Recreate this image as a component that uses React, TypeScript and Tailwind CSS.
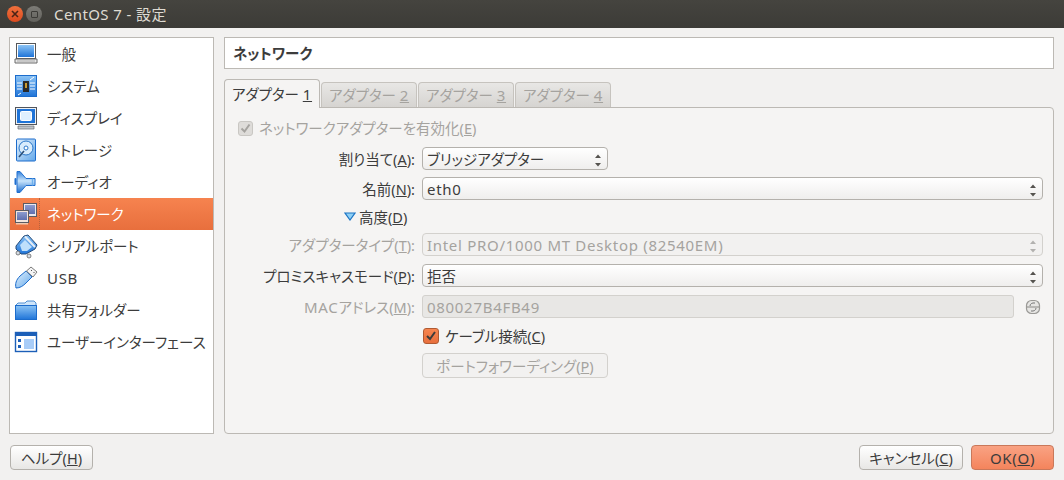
import React from 'react';

const BlueDefs = () => (
  <defs>
    <linearGradient id="blue" x1="0" y1="0" x2="0" y2="1">
      <stop offset="0" stopColor="#8cc4f5" />
      <stop offset="1" stopColor="#1f74d8" />
    </linearGradient>
    <linearGradient id="sky" x1="0" y1="0" x2="1" y2="1">
      <stop offset="0" stopColor="#e3f1fd" />
      <stop offset="1" stopColor="#63a8ea" />
    </linearGradient>
    <linearGradient id="slate" x1="0" y1="0" x2="0" y2="1">
      <stop offset="0" stopColor="#8d9bcf" />
      <stop offset="1" stopColor="#5f6fae" />
    </linearGradient>
    <linearGradient id="cone" x1="0" y1="0" x2="0" y2="1">
      <stop offset="0" stopColor="#2f7fdc" />
      <stop offset="0.45" stopColor="#c8e4fb" />
      <stop offset="1" stopColor="#1f6fd0" />
    </linearGradient>
  </defs>
);

const GeneralIcon = () => (
  <svg width="24" height="24" viewBox="0 0 24 24">
    <rect x="2.5" y="1.5" width="19" height="15" fill="#fff" stroke="#55575a" />
    <rect x="4" y="3" width="16" height="12" fill="url(#blue)" />
    <path d="M1 17h22v4H1z" fill="#e9e9e9" stroke="#6a6a6a" strokeWidth="1" />
    <path d="M3 19h18" stroke="#a8a8a8" />
  </svg>
);

const SystemIcon = () => (
  <svg width="24" height="24" viewBox="0 0 24 24">
    <rect x="1.5" y="1.5" width="21" height="21" fill="url(#blue)" stroke="#1c6ccc" />
    <rect x="9" y="7" width="6" height="11" fill="#2a2a2a" />
    <rect x="11" y="9" width="2" height="5" fill="#c99a2e" />
    <path d="M3 9h5M3 12h5M3 15h5M16 9h5M16 12h5M16 15h5M16 6l4-3M7 19l-3 2" stroke="#fff" strokeWidth="1" />
  </svg>
);

const DisplayIcon = () => (
  <svg width="24" height="24" viewBox="0 0 24 24">
    <rect x="1.5" y="1.5" width="21" height="17" fill="#eef1f5" stroke="#51555c" />
    <rect x="3" y="3" width="18" height="14" fill="#1f74d8" />
    <rect x="6.5" y="5.5" width="11" height="9" rx="1" fill="#dff0ff" stroke="#fff" />
    <path d="M4 20h16v3H4z" fill="#bfc3c8" stroke="#6a6e74" strokeWidth="0.7" />
  </svg>
);

const StorageIcon = () => (
  <svg width="24" height="24" viewBox="0 0 24 24">
    <rect x="2.5" y="1" width="19" height="22" rx="1" fill="url(#sky)" stroke="#1c6ccc" />
    <circle cx="12" cy="10" r="7" fill="#d8ecfc" stroke="#2a77c9" />
    <circle cx="12" cy="10" r="2" fill="#fff" stroke="#2a77c9" />
    <path d="M5 19l5-6" stroke="#2c4f78" strokeWidth="1.6" />
  </svg>
);

const AudioIcon = () => (
  <svg width="24" height="24" viewBox="0 0 24 24">
    <rect x="0.5" y="8" width="2" height="7" rx="1" fill="#1f6fd0" />
    <path d="M3 1.500h3l6 7h9v7h-9l-6 7H3z" fill="url(#cone)" stroke="#1f6fd0" strokeWidth="1" />
    <path d="M18.500 8.500v7" stroke="#6fb0ec" strokeWidth="1.500" />
  </svg>
);

const NetworkIcon = () => (
  <svg width="24" height="24" viewBox="0 0 24 24">
    <rect x="9.500" y="1.500" width="13" height="13" fill="#e9e7ec" stroke="#5b5b63" />
    <rect x="11" y="3" width="10" height="9" fill="url(#slate)" />
    <rect x="1.500" y="8.500" width="13" height="12" fill="#f3e4dc" stroke="#5b5b63" />
    <rect x="3" y="10" width="10" height="8" fill="url(#slate)" />
    <path d="M2 21h12v1.500H2z" fill="#f0c8ae" />
  </svg>
);

const SerialIcon = () => (
  <svg width="26" height="26" viewBox="0 0 26 26">
    <path d="M11 3l4-1 9 10-2 4-9 5H8L3 16v-3z" fill="url(#blue)" stroke="#244a78" strokeWidth="1" />
    <path d="M12 3.500l10 10.500" stroke="#e6eef7" strokeWidth="2" />
    <path d="M7 12l5-5 7 7-5 4H9z" fill="#bfe0fb" />
    <circle cx="5" cy="20" r="2" fill="#d6dce3" stroke="#555" strokeWidth="0.700" />
    <circle cx="16" cy="23" r="2" fill="#d6dce3" stroke="#555" strokeWidth="0.700" />
  </svg>
);

const UsbIcon = () => (
  <svg width="24" height="24" viewBox="0 0 24 24">
    <path d="M2 22c-1-4 0-8 4-12l6-5 6 6-6 6c-3 3-6 5-10 5z" fill="url(#sky)" stroke="#1c6ccc" />
    <path d="M12.500 5L17 1l6 5-4 5z" fill="#f4f4f4" stroke="#7b7b7b" />
    <path d="M17 4l1 1M19.500 6l1 1" stroke="#555" />
  </svg>
);

const FolderIcon = () => (
  <svg width="24" height="24" viewBox="0 0 24 24">
    <path d="M2 7l2-2h7l2-2h7l2 2v3H2z" fill="#cfe5f9" stroke="#2a77c9" strokeWidth="0.800" />
    <rect x="1.500" y="7.500" width="21" height="14" fill="url(#blue)" stroke="#1c6ccc" />
  </svg>
);

const InterfaceIcon = () => (
  <svg width="24" height="24" viewBox="0 0 24 24">
    <rect x="1.500" y="2.500" width="21" height="19" fill="#fff" stroke="#1c5fb8" strokeWidth="1.400" />
    <rect x="2" y="3" width="20" height="3" fill="#1c5fb8" />
    <rect x="10" y="9" width="10" height="10" fill="#a9cdf8" />
    <rect x="4" y="9" width="3" height="3" fill="#1c5fb8" />
    <rect x="4" y="15" width="3" height="3" fill="#1c5fb8" />
  </svg>
);

const latin = 'text-[15px] tracking-[0.7px]';

const categories = [
  { name: '一般', icon: <GeneralIcon /> },
  { name: 'システム', icon: <SystemIcon /> },
  { name: 'ディスプレイ', icon: <DisplayIcon /> },
  { name: 'ストレージ', icon: <StorageIcon /> },
  { name: 'オーディオ', icon: <AudioIcon /> },
  { name: 'ネットワーク', icon: <NetworkIcon />, selected: true },
  { name: 'シリアルポート', icon: <SerialIcon /> },
  { name: <span className={latin}>USB</span>, icon: <UsbIcon /> },
  { name: '共有フォルダー', icon: <FolderIcon /> },
  { name: 'ユーザーインターフェース', icon: <InterfaceIcon /> },
];

const tabs = ['1', '2', '3', '4'];

const Spinner = ({ disabled = false }: { disabled?: boolean }) => (
  <svg width="8" height="14" viewBox="0 0 8 14" className={`mt-[2px] ${disabled ? 'opacity-40' : ''}`}>
    <path d="M4 1.500l3 3.500H1zM1 10h6l-3 3.500z" fill="#55534f" />
  </svg>
);

const Combo = ({ children, disabled = false, className = '' }: { children: React.ReactNode; disabled?: boolean; className?: string }) => (
  <div
    className={`flex h-[23px] items-center justify-between rounded-[4px] border pl-[4px] pr-[5px] ${
      disabled
        ? 'border-[#d3d1cd] bg-[#f2f1f0] text-[#a5a39f]'
        : 'border-[#b4b1ac] bg-gradient-to-b from-white to-[#efeeed] text-[#3c3c3c]'
    } ${className}`}
  >
    <span>{children}</span>
    <Spinner disabled={disabled} />
  </div>
);

const Row = ({ label, disabled = false, className = '', children }: { label: React.ReactNode; disabled?: boolean; className?: string; children: React.ReactNode }) => (
  <div className={`flex items-center ${className}`}>
    <div className={`w-[190px] text-right ${disabled ? 'text-[#a5a39f]' : 'text-[#3c3c3c]'}`}>{label}</div>
    <div className="ml-[7px] w-[621px]">{children}</div>
  </div>
);

export default function App() {
  return (
    <div
      className='flex h-[480px] w-[1064px] flex-col overflow-hidden bg-[#f2f1f0] text-[14.5px] leading-[20px] text-[#3c3c3c] [font-feature-settings:"palt"]'
      style={{ fontFamily: '"Noto Sans", "Noto Sans CJK JP", sans-serif' }}
    >
      <svg width="0" height="0" className="absolute">
        <BlueDefs />
      </svg>

      {/* title bar */}
      <div className="flex h-[28px] items-center bg-gradient-to-b from-[#45443f] to-[#3c3b37] pl-[7px] text-[#dfdbd2]">
        <div className="flex h-[16px] w-[16px] items-center justify-center rounded-full bg-gradient-to-b from-[#f0703c] to-[#dc4a1e]">
          <svg width="8" height="8" viewBox="0 0 8 8">
            <path d="M1 1l6 6M7 1L1 7" stroke="#4b2416" strokeWidth="1.600" />
          </svg>
        </div>
        <div className="ml-[3px] flex h-[16px] w-[16px] items-center justify-center rounded-full bg-gradient-to-b from-[#7d7c77] to-[#62615c]">
          <div className="h-[7px] w-[7px] rounded-[1px] border border-[#3c3b37]" />
        </div>
        <span className="ml-[12px] text-[15px] tracking-[0.4px]">CentOS 7 - 設定</span>
      </div>

      <div className="flex flex-1 flex-col pb-[9px] pl-[9px] pr-[10px] pt-[9px]">
        <div className="flex h-[397px] gap-[10px]">
          {/* category list */}
          <div className="w-[205px] border border-[#bcb9b4] bg-white">
            {categories.map((c, i) => (
              <div
                key={i}
                className={`flex h-[32px] items-center whitespace-nowrap ${
                  c.selected ? 'bg-gradient-to-b from-[#f6834f] to-[#e86f3d] text-white' : ''
                }`}
              >
                <div className="flex w-[29px] shrink-0 justify-center pl-[3px]">{c.icon}</div>
                <div className={`flex h-full items-center pl-[7px] ${c.selected ? 'border-l border-dotted border-[#b8623c]' : 'border-l border-transparent'}`}>
                  {c.name}
                </div>
              </div>
            ))}
          </div>

          {/* network page */}
          <div className="flex w-[830px] flex-col">
            <div className="flex h-[32px] items-center border border-[#bcb9b4] bg-white pl-[8px] font-bold">ネットワーク</div>

            <div className="mt-[10px] flex h-[28px] items-end">
              {tabs.map((t, i) => (
                <div
                  key={t}
                  className={
                    i === 0
                      ? 'relative z-10 -mb-px mr-[1px] flex h-[29px] w-[96px] items-center justify-center rounded-t-[4px] border border-b-0 border-[#bcb9b4] bg-[#f5f4f3]'
                      : 'mr-[1px] flex h-[25px] w-[96px] items-center justify-center rounded-t-[4px] border border-b-0 border-[#c6c3be] bg-gradient-to-b from-[#e8e7e5] to-[#d6d4d1] text-[#a5a39f]'
                  }
                >
                  <span>アダプター <u className={latin}>{t}</u></span>
                </div>
              ))}
            </div>

            <div className="flex flex-1 flex-col rounded-b-[4px] rounded-tr-[4px] border border-[#bcb9b4] bg-[#f5f4f3] pt-[9px]">
              <div className="flex h-[22px] items-center gap-[6px] pl-[13px] text-[#a5a39f]">
                <div className="flex h-[15px] w-[15px] items-center justify-center rounded-[3px] border border-[#c9c7c3] bg-[#dedcd9]">
                  <svg width="11" height="11" viewBox="0 0 11 11">
                    <path d="M1.500 5.500l3 3 5-7" stroke="#a5a39f" strokeWidth="2" fill="none" />
                  </svg>
                </div>
                <span>ネットワークアダプターを有効化(<u>E</u>)</span>
              </div>

              <Row label={<>割り当て(<u>A</u>):</>} className="mt-[8px]">
                <Combo className="w-[186px]">ブリッジアダプター</Combo>
              </Row>
              <Row label={<>名前(<u>N</u>):</>} className="mt-[7px]">
                <Combo><span className={latin}>eth0</span></Combo>
              </Row>
              <div className="mt-[5px] flex h-[23px] items-center pl-[119px]">
                <svg width="12" height="9" viewBox="0 0 12 9">
                  <path d="M1 1h10L6 8z" fill="#8fd0f5" stroke="#1c74c4" strokeWidth="1.200" />
                </svg>
                <span className="ml-[3px]">高度(<u>D</u>)</span>
              </div>
              <Row label={<>アダプタータイプ(<u>T</u>):</>} disabled className="mt-[5px]">
                <Combo disabled><span className={latin}>Intel PRO/1000 MT Desktop (82540EM)</span></Combo>
              </Row>
              <Row label={<>プロミスキャスモード(<u>P</u>):</>} className="mt-[8px]">
                <Combo>拒否</Combo>
              </Row>
              <Row label={<><span className={latin}>MAC</span>アドレス(<u>M</u>):</>} disabled className="mt-[8px]">
                <div className="flex items-center">
                  <div className={`flex h-[23px] w-[592px] items-center rounded-[3px] border border-[#d3d1cd] bg-[#e8e7e5] pl-[4px] text-[#a5a39f] ${latin}`}>
                    080027B4FB49
                  </div>
                  <svg width="16" height="16" viewBox="0 0 16 16" className="ml-[11px]">
                    <rect x="1.500" y="1.500" width="13" height="13" rx="5" fill="#e6e5e3" stroke="#9a9996" strokeWidth="1.200" />
                    <path d="M2 8h12" stroke="#8a8986" strokeWidth="1" />
                    <path d="M5 7c0-2 2-3.500 5-3M11 9c0 2-2 3.500-5 3" stroke="#777" strokeWidth="1" fill="none" />
                  </svg>
                </div>
              </Row>
              <div className="ml-[198px] mt-[6px] flex h-[23px] items-center gap-[6px]">
                <div className="flex h-[16px] w-[16px] items-center justify-center rounded-[3px] border border-[#b05a32] bg-gradient-to-b from-[#f6854f] to-[#e86f3d]">
                  <svg width="12" height="12" viewBox="0 0 12 12">
                    <path d="M2 6l3 3 5-7" stroke="#3c3c3c" strokeWidth="2" fill="none" />
                  </svg>
                </div>
                <span>ケーブル接続(<u>C</u>)</span>
              </div>
              <div className="ml-[197px] mt-[6px] flex h-[25px] w-[186px] items-center justify-center rounded-[4px] border border-[#d3d1cd] bg-[#f2f1f0] text-[#a5a39f]">
                <span>ポートフォワーディング(<u>P</u>)</span>
              </div>
            </div>
          </div>
        </div>

        {/* dialog buttons */}
        <div className="mt-[11px] flex items-center justify-between pl-[1px]">
          <button className="flex h-[25px] w-[83px] items-center justify-center rounded-[4px] border border-[#b4b1ac] bg-gradient-to-b from-white to-[#e8e7e5]">
            <span>ヘルプ(<u>H</u>)</span>
          </button>
          <div className="flex gap-[8px]">
            <button className="flex h-[25px] w-[104px] items-center justify-center rounded-[4px] border border-[#b4b1ac] bg-gradient-to-b from-white to-[#e8e7e5]">
              <span>キャンセル(<u>C</u>)</span>
            </button>
            <button className="flex h-[25px] w-[83px] items-center justify-center rounded-[4px] border border-[#c9785a] bg-gradient-to-b from-[#f9a283] to-[#f4845c]">
              <span className={latin}>OK(<u>O</u>)</span>
            </button>
          </div>
        </div>
      </div>
    </div>
  );
}
